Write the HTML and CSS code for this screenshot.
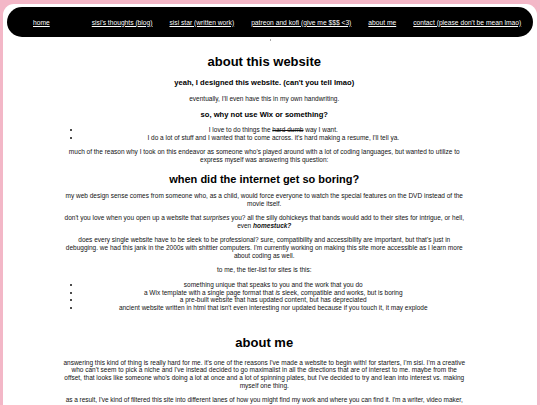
FILE: index.html
```html
<!DOCTYPE html>
<html lang="en">
<head>
<meta charset="utf-8">
<title>about</title>
<link rel="stylesheet" href="styles.css">
</head>
<body>
<div class="page">
  <nav class="topnav">
    <a class="home" href="#">home</a>
    <a href="#">sisi's thoughts (blog)</a>
    <a href="#">sisi star (written work)</a>
    <a href="#">patreon and kofi (give me $$$ &lt;3)</a>
    <a href="#">about me</a>
    <a href="#">contact (please don't be mean lmao)</a>
  </nav>
  <div class="spacer"><span class="dot"></span></div>
  <main class="content">
    <h1>about this website</h1>
    <h3>yeah, I designed this website. (can't you tell lmao)</h3>
    <p>eventually, I'll even have this in my own handwriting.</p>
    <h3>so, why not use Wix or something?</h3>
    <ul>
      <li>I love to do things the <s>hard dumb</s> way I want.</li>
      <li>I do a lot of stuff and I wanted that to come across. it's hard making a resume, I'll tell ya.</li>
    </ul>
    <p>much of the reason why I took on this endeavor as someone who's played around with a lot of coding languages, but wanted to utilize to express myself was answering this question:</p>
    <h2>when did the internet get so boring?</h2>
    <p>my web design sense comes from someone who, as a child, would force everyone to watch the special features on the DVD instead of the movie itself.</p>
    <p>don't you love when you open up a website that <em>surprises</em> you? all the silly dohickeys that bands would add to their sites for intrigue, or hell, even <strong><em>homestuck?</em></strong></p>
    <p>does every single website have to be sleek to be professional? sure, compatibility and accessibility are important, but that's just in debugging. we had this jank in the 2000s with shittier computers. I'm currently working on making this site more accessible as I learn more about coding as well.</p>
    <p>to me, the tier-list for sites is this:</p>
    <ul>
      <li>something unique that speaks to you and the work that you do</li>
      <li>a Wix template with a single page format that <em>is</em> sleek, compatible and works, but is boring</li>
      <li>a pre-built website that has updated content, but has depreciated</li>
      <li>ancient website written in html that isn't even interesting nor updated because if you touch it, it may explode</li>
    </ul>
    <h1 class="me">about me</h1>
    <p>answering this kind of thing is really hard for me. it's one of the reasons I've made a website to begin with! for starters, I'm sisi. I'm a creative who can't seem to pick a niche and I've instead decided to go maximalist in all the directions that are of interest to me. maybe from the offset, that looks like someone who's doing a lot at once and a lot of spinning plates, but I've decided to try and lean into interest vs. making myself one thing.</p>
    <p class="result">as a result, I've kind of filtered this site into different lanes of how you might find my work and where you can find it. I'm a writer, video maker, artist and a lot of other things, so take a look around.</p>
  </main>
</div>
</body>
</html>
```

FILE: styles.css
```css
html, body {
  margin: 0;
  padding: 0;
}

body {
  background: #f3b7c7;
  font-family: "Liberation Sans", Arial, sans-serif;
  color: #111;
}

.page {
  margin: 4px 3px 0;
  background: #fff;
  border-radius: 11px 11px 0 0;
  padding: 3px 4px 40px;
  min-height: 420px;
}

.topnav {
  height: 30px;
  background: #000;
  border-radius: 15px;
  display: flex;
  align-items: center;
  padding-left: 26px;
  font-size: 6.7px;
}

.topnav a {
  color: #fff;
  text-decoration: underline;
  margin-right: 17px;
  white-space: nowrap;
}

.topnav a.home {
  margin-right: 42px;
}

.spacer {
  height: 17px;
  display: flex;
  justify-content: center;
}

.dot {
  width: 1px;
  height: 2px;
  margin-top: 2px;
  background: #aaa;
}

.content {
  width: 402.5px;
  margin-left: 56px;
  text-align: center;
  font-size: 6.5px;
  line-height: 7.7px;
  color: #111;
}

.content h1 {
  font-size: 13px;
  line-height: 15px;
  margin: 0 0 9.4px;
  color: #000;
}

.content h1.me {
  margin-top: 23.7px;
  margin-bottom: 8.1px;
}

.content h2 {
  font-size: 11px;
  line-height: 13px;
  margin: 9px 0 6.6px;
  color: #000;
}

.content h3 {
  font-size: 7.6px;
  line-height: 9px;
  margin: 7.4px 0;
  color: #000;
}

.content p {
  margin: 6.5px 0;
}

.content p.result {
  letter-spacing: -0.04px;
}

.content ul {
  padding-left: 18px;
  margin: 7.5px 0 6.5px;
}
```
